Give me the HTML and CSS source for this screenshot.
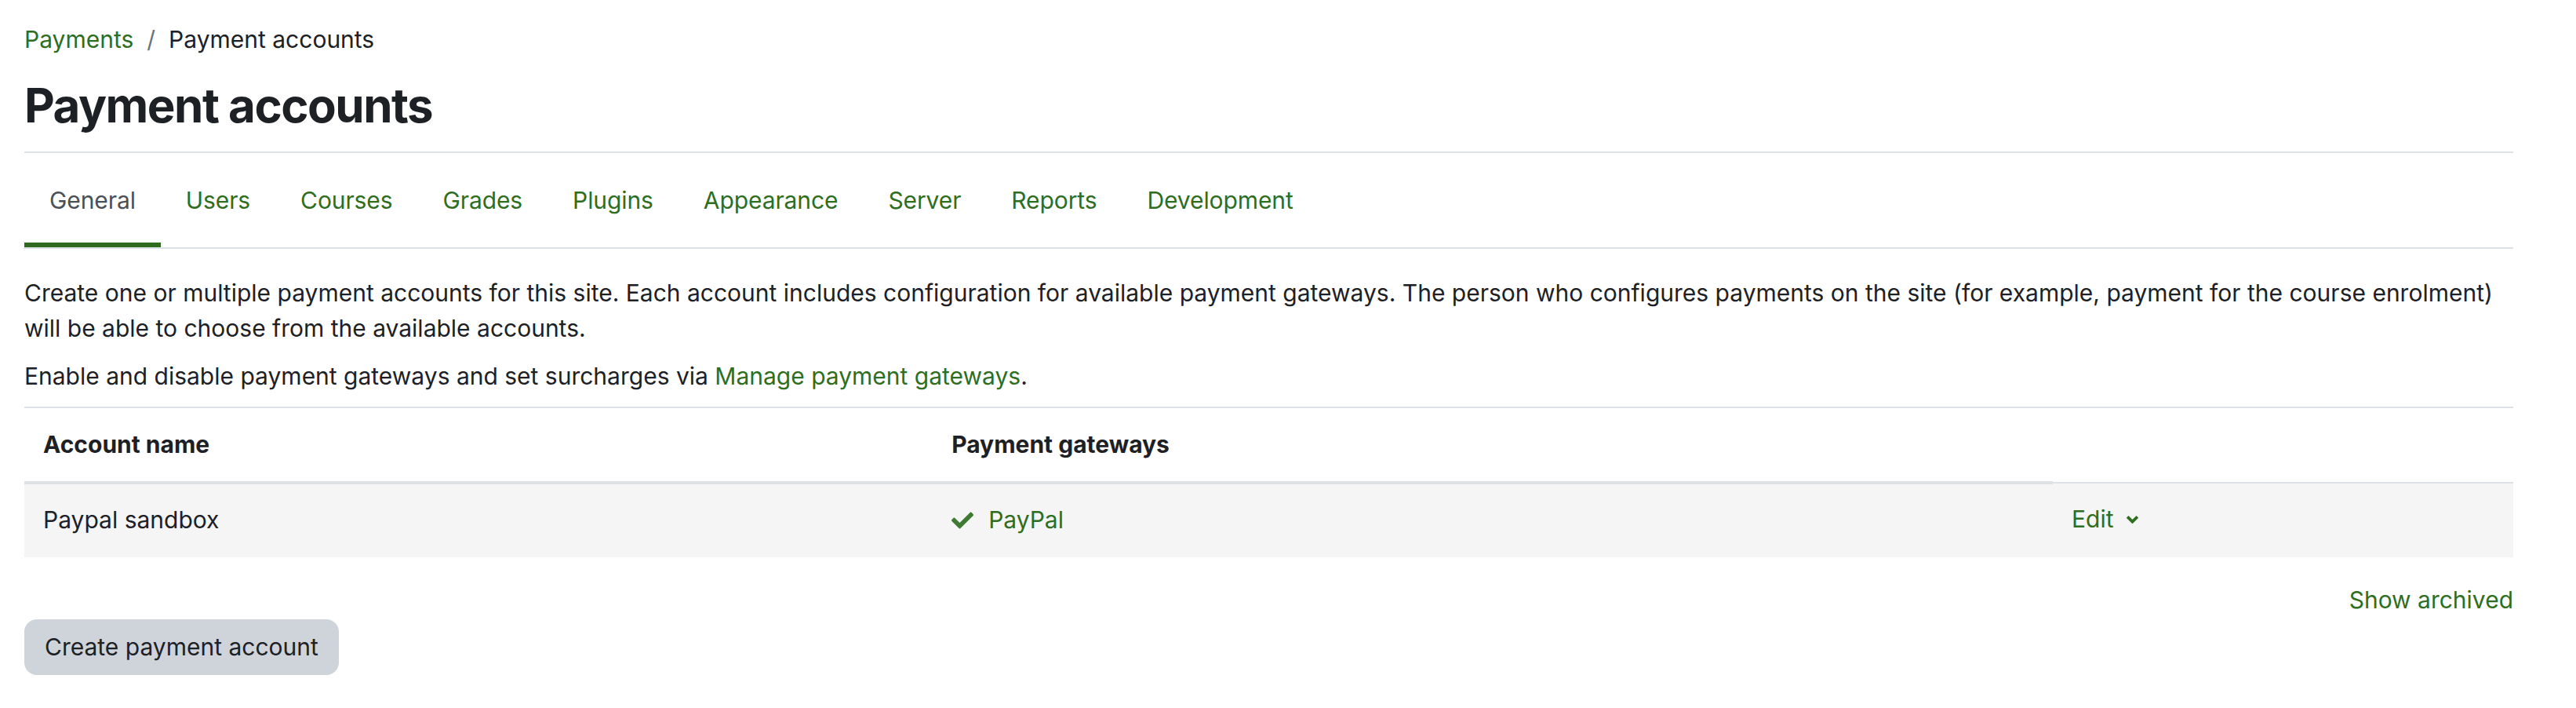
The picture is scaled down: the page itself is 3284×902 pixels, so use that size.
FILE: index.html
```html
<!DOCTYPE html>
<html lang="en">
<head>
    <meta charset="UTF-8">
    <title>Payment accounts</title>
    <link rel="stylesheet" href="styles.css">
</head>
<body>
    <div id="page">
        <nav class="breadcrumb">
            <a href="#">Payments</a>
            <span class="crumbSep">/</span>
            <span>Payment accounts</span>
        </nav>
        <h2 class="pageTitle">Payment accounts</h2>

        <ul class="tabs">
            <li><a href="#" class="active">General</a></li>
            <li><a href="#">Users</a></li>
            <li><a href="#">Courses</a></li>
            <li><a href="#">Grades</a></li>
            <li><a href="#">Plugins</a></li>
            <li><a href="#">Appearance</a></li>
            <li><a href="#">Server</a></li>
            <li><a href="#">Reports</a></li>
            <li><a href="#">Development</a></li>
        </ul>

        <div id="content">
            <p>Create one or multiple payment accounts for this site. Each account includes configuration for available payment gateways. The person who configures payments on the site (for example, payment for the course enrolment) will be able to choose from the available accounts.</p>
            <p>Enable and disable payment gateways and set surcharges via <a href="#">Manage payment gateways</a>.</p>

            <table class="accounts">
                <thead>
                    <tr>
                        <th class="colName">Account name</th>
                        <th class="colGateways">Payment gateways</th>
                        <th class="colActions"></th>
                    </tr>
                </thead>
                <tbody>
                    <tr>
                        <td>Paypal sandbox</td>
                        <td>
                            <span class="gateway">
                                <!-- solid check mark -->
                                <svg class="checkIcon" viewBox="0 0 512 512"><path d="M173.9 439.4l-166.4-166.4c-10-10-10-26.2 0-36.2l36.2-36.2c10-10 26.2-10 36.2 0L192 312.7 432.1 72.6c10-10 26.2-10 36.2 0l36.2 36.2c10 10 10 26.2 0 36.2l-294.4 294.4c-10 10-26.2 10-36.2 0z"/></svg>
                                <a href="#">PayPal</a>
                            </span>
                        </td>
                        <td>
                            <a href="#" class="editMenu">Edit
                                <svg class="chevron" viewBox="0 0 16 10"><polyline points="2,2 8,8 14,2"/></svg>
                            </a>
                        </td>
                    </tr>
                </tbody>
            </table>

            <div class="archived"><a href="#">Show archived</a></div>
            <button class="btnCreate">Create payment account</button>
        </div>
    </div>
</body>
</html>
```

FILE: styles.css
```css
body {
    margin: 0;
    background-color: #fff;
    color: #1d2125;
    font-family: Inter, "Noto Sans", sans-serif;
    font-size: 30px;
    line-height: 1.5;
}

a {
    color: #2e6e1e;
    text-decoration: none;
}

#page {
    padding: 28px 80px 0 31px;
}

.breadcrumb {
    display: flex;
    align-items: center;
    gap: 17px;
}

.crumbSep {
    color: #6a737b;
}

.pageTitle {
    margin: 25px 0 0 0;
    padding-bottom: 23px;
    font-size: 60px;
    line-height: 1.2;
    font-weight: 700;
    letter-spacing: -1.5px;
    border-bottom: 2px solid #dee2e6;
}

.tabs {
    list-style: none;
    margin: 0;
    padding: 0;
    display: flex;
    border-bottom: 2px solid #dee2e6;
}

.tabs a {
    display: flex;
    align-items: center;
    height: 120px;
    box-sizing: border-box;
    padding: 6px 32px 0 32px;
    border-bottom: 6px solid transparent;
    letter-spacing: -0.1px;
}

.tabs a.active {
    color: #495057;
    border-bottom-color: #2f6b1f;
}

#content {
    padding-top: 34px;
}

#content p {
    margin: 0 0 16px 0;
}

.accounts {
    width: 100%;
    border-collapse: collapse;
}

.accounts th,
.accounts td {
    padding: 24px;
    text-align: left;
    vertical-align: top;
}

.accounts th {
    font-weight: 700;
    border-top: 2px solid #dee2e6;
    border-bottom: 4px solid #dee2e6;
}

.accounts th.colActions {
    border-bottom-width: 2px;
}

.accounts td {
    padding: 23px 24px 21px 24px;
    background-color: #f5f5f5;
}

.colName {
    width: 36.5%;
}

.colGateways {
    width: 45%;
}

.gateway {
    display: inline-flex;
    align-items: center;
}

.checkIcon {
    width: 28px;
    height: 28px;
    fill: #3f7a33;
    margin-right: 19px;
}

.editMenu {
    display: inline-flex;
    align-items: center;
}

.chevron {
    width: 17px;
    height: 11px;
    margin-left: 16px;
    fill: none;
    stroke: #2e6e1e;
    stroke-width: 3.5;
}

.archived {
    margin-top: 32px;
    text-align: right;
}

.btnCreate {
    margin-top: 2px;
    font-family: inherit;
    font-size: 30px;
    line-height: 1.5;
    color: #1d2125;
    background-color: #ced4da;
    border: 2px solid #ced4da;
    border-radius: 16px;
    padding: 11px 24px;
}
```
